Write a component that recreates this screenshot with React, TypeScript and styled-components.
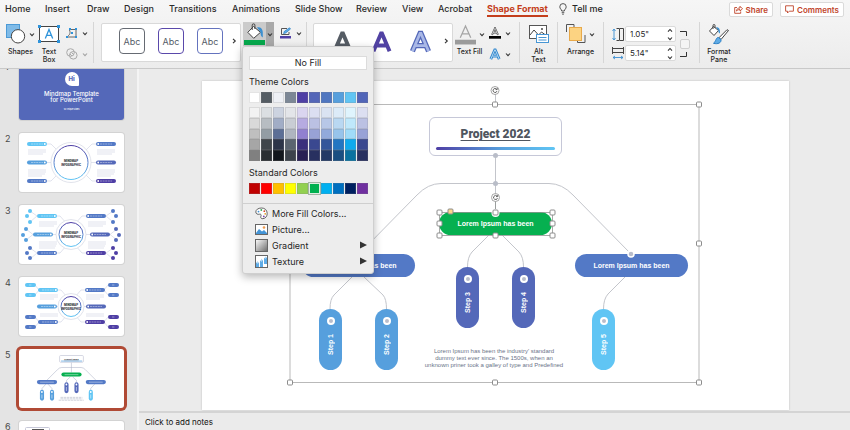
import React from "react";
import styled, { createGlobalStyle, css } from "styled-components";

const ui = `Inter, Roboto, "Liberation Sans", sans-serif`;
const slideFont = `"Liberation Sans", Arial, sans-serif`;

const GlobalStyle = createGlobalStyle`
  *, *::before, *::after { box-sizing: border-box; }
  body { margin: 0; font-family: ${ui}; color: #262626; background: #ebebeb; }
  button, input { font: inherit; color: inherit; }
  button { border: 0; padding: 0; background: none; cursor: pointer; }
  svg { display: block; flex: none; }
`;

/* ---------- frame ---------- */

const Page = styled.div`
  display: flex;
  flex-direction: column;
  height: 100vh;
  overflow: hidden;
`;

const Header = styled.header`
  position: relative;
  z-index: 2;
  background: linear-gradient(#f6f6f6, #ececec);
  border-bottom: 1px solid #c9c9c9;
`;

const TabBar = styled.div`
  display: flex;
  justify-content: space-between;
  height: 20px;
  padding: 0 6px 0 5px;
`;

const Tabs = styled.nav`
  display: flex;
  align-items: flex-start;
  gap: 16px;
`;

const Tab = styled.a<{ $active?: boolean; $width: number }>`
  width: ${(p) => p.$width}px;
  height: 17px;
  line-height: 17px;
  font-size: 9px;
  font-weight: 500;
  white-space: nowrap;
  text-decoration: none;
  color: #2b2b2b;
  ${(p) =>
    p.$active &&
    css`
      color: #c43e1c;
      font-weight: 700;
      border-bottom: 2px solid #c43e1c;
    `}
`;

const TellMe = styled.button`
  display: flex;
  align-items: center;
  gap: 5px;
  height: 17px;
  margin-left: -5px;
  font-size: 9px;
  font-weight: 500;
`;

const Actions = styled.div`
  display: flex;
  gap: 7px;
  padding-top: 2px;
`;

const ActionButton = styled.button`
  display: flex;
  align-items: center;
  justify-content: center;
  gap: 3px;
  height: 15px;
  padding: 0 4px;
  border: 1px solid #dadada;
  border-radius: 2px;
  background: #fff;
  color: #c0452b;
  font-size: 8px;
  font-weight: 600;
`;

/* ---------- ribbon ---------- */

const Ribbon = styled.div`
  display: grid;
  grid-template-columns: 94px 213px 213px 38px 46px 96px 1fr;
  padding: 2px 0 5px;
`;

const Group = styled.div<{ $pad?: number; $center?: boolean }>`
  display: flex;
  align-items: flex-start;
  justify-content: ${(p) => (p.$center ? "center" : "flex-start")};
  height: 41px;
  padding-left: ${(p) => p.$pad ?? 0}px;
  border-right: 1px solid #d6d6d6;
  &:last-child { border-right: 0; }
`;

const Tool = styled.button<{ $width: number; $gap?: number }>`
  display: flex;
  flex-direction: column;
  align-items: center;
  width: ${(p) => p.$width}px;
  margin-right: ${(p) => p.$gap ?? 0}px;
  font-size: 7px;
  font-weight: 500;
  line-height: 8px;
`;

const ToolTop = styled.span`
  display: flex;
  align-items: center;
  gap: 3px;
  height: 26px;
  padding-bottom: 2px;
`;

const Pair = styled.div`
  display: flex;
  flex-direction: column;
  gap: 7px;
  padding-top: 4px;
`;

const MiniButton = styled.button<{ $dim?: boolean }>`
  display: flex;
  align-items: center;
  gap: 4px;
  height: 14px;
  opacity: ${(p) => (p.$dim ? 0.4 : 1)};
`;

const Gallery = styled.div`
  display: flex;
  align-items: center;
  justify-content: space-between;
  width: 140px;
  height: 39px;
  margin-top: 1px;
  padding: 0 3px 3px 17px;
  background: #fff;
  border: 1px solid #d9d9d9;
  border-radius: 2px;
`;

const Samples = styled.div<{ $gap: number }>`
  display: flex;
  gap: ${(p) => p.$gap}px;
`;

const StyleSample = styled.button<{ $color: string }>`
  width: 26px;
  height: 26px;
  border: 1px solid ${(p) => p.$color};
  border-radius: 4px;
  background: #fff;
  color: #555b66;
  font-size: 9px;
`;

const FillWrap = styled.div`
  position: relative;
  display: flex;
  margin: 0 5px 0 2px;
`;

const FillButton = styled.button`
  display: flex;
  flex-direction: column;
  align-items: center;
  justify-content: flex-end;
  width: 23px;
  height: 24px;
  padding-bottom: 1px;
  background: #cbcbcb;
`;

const FillToggle = styled.button`
  display: flex;
  align-items: center;
  justify-content: center;
  width: 8px;
  height: 24px;
  background: #a9a9a9;
`;

const LineButton = styled(MiniButton)`
  margin-top: 4px;
`;

const SizeFields = styled.div`
  display: flex;
  flex-direction: column;
  gap: 3px;
  padding-top: 4px;
`;

const SizeField = styled.label`
  display: flex;
  align-items: center;
  gap: 1px;
  height: 16px;
`;

const SizeBox = styled.span`
  display: flex;
  align-items: center;
  width: 51px;
  height: 16px;
  padding-right: 2px;
  background: #fff;
  border: 1px solid #dadada;
  border-radius: 2px;
`;

const SizeInput = styled.input`
  width: 40px;
  padding: 0 0 0 4px;
  border: 0;
  background: none;
  font-size: 8px;
  outline: 0;
`;

const Stepper = styled.span`
  display: flex;
  flex-direction: column;
  gap: 3px;
  margin-left: auto;
  button { display: block; }
`;

const LockRatio = styled.div`
  display: flex;
  flex-direction: column;
  gap: 3px;
  margin: 9px 0 0 4px;
`;

const LockBox = styled.input`
  appearance: none;
  width: 10px;
  height: 10px;
  margin: 0;
  border: 1px solid #cfcfcf;
  border-radius: 2px;
  background: #f4f4f4;
`;

/* ---------- fill menu ---------- */

const Menu = styled.div`
  position: absolute;
  top: 24px;
  left: -1px;
  width: 132px;
  padding: 9px 0 4px;
  background: #ededed;
  border: 1px solid #cfcfcf;
  border-radius: 3px;
  box-shadow: 0 3px 8px rgba(0, 0, 0, 0.28);
`;

const MenuSection = styled.div`
  padding: 0 6px;
`;

const NoFill = styled.button`
  display: block;
  width: 100%;
  height: 14px;
  background: #fff;
  border: 1px solid #dcdcdc;
  font-size: 9px;
  line-height: 12px;
`;

const MenuTitle = styled.h2`
  margin: 0;
  padding-top: 5px;
  height: 22px;
  font-size: 9px;
  font-weight: 400;
  line-height: 14px;
`;

const SwatchRow = styled.div`
  display: grid;
  grid-template-columns: repeat(10, 11px);
  column-gap: 1px;
  grid-auto-rows: 11px;
`;

const ShadeGrid = styled(SwatchRow)`
  grid-auto-flow: column;
  grid-template-rows: 11px 11px 10px 11px 11px;
  margin: 4px 0 0;
`;

const Swatch = styled.button<{ $color: string; $selected?: boolean }>`
  background: ${(p) => p.$color};
  box-shadow: inset 0 0 0 1px rgba(130, 130, 130, 0.22);
  ${(p) =>
    p.$selected &&
    css`
      outline: 1px solid #a4b3a6;
      box-shadow: inset 0 0 0 1px #dfeee2;
    `}
`;

const MenuRule = styled.hr`
  margin: 9px 0 1px;
  border: 0;
  border-top: 1px solid #cfcfcf;
`;

const MenuItem = styled.button`
  display: flex;
  align-items: center;
  gap: 4px;
  width: 100%;
  height: 16px;
  padding: 0 6px 0 12px;
  font-size: 9px;
  text-align: left;
  svg:last-child:not(:first-child) { margin-left: auto; }
`;

/* ---------- workspace ---------- */

const Workspace = styled.main`
  display: grid;
  grid-template-columns: 139px 1fr;
  flex: 1;
  min-height: 0;
`;

const Sidebar = styled.aside`
  overflow: hidden;
  background: #e4e4e4;
  border-right: 2px solid #f4f4f4;
`;

const SlideList = styled.ol`
  display: flex;
  flex-direction: column;
  gap: 13px;
  margin: -8px 0 0;
  padding: 0;
  list-style: none;
`;

const SlideEntry = styled.li`
  display: grid;
  grid-template-columns: 14px 105px;
  padding-left: 5px;
  font-size: 9px;
  line-height: 11px;
  color: #4a4a4a;
`;

const Thumb = styled.button<{ $active?: boolean; $cover?: boolean }>`
  height: 59px;
  border-radius: 3px;
  background: ${(p) => (p.$cover ? "#5468b9" : "#fff")};
  color: #fff;
  overflow: hidden;
  box-shadow: ${(p) =>
    p.$active ? "0 0 0 3px #b04a35" : "0 0 0 1px #d3d3d3"};
`;

const Cover = styled.span`
  display: flex;
  flex-direction: column;
  align-items: center;
  padding-top: 1px;
  font-size: 6px;
  font-weight: 500;
  line-height: 6px;
  small { margin-top: 5px; font-size: 2px; line-height: 3px; }
`;

const CoverTitle = styled.span`
  margin-top: 5px;
`;

const Logo = styled.span`
  display: grid;
  place-items: center;
  width: 14px;
  height: 14px;
  border-radius: 7px 7px 1px 7px;
  background: #fff;
  color: #5468b9;
  font-size: 6px;
  font-weight: 800;
`;

const Editor = styled.section`
  display: flex;
  flex-direction: column;
  min-width: 0;
`;

const Stage = styled.div`
  flex: 1;
  min-height: 0;
  padding: 12px 61px 0 63px;
`;

const Slide = styled.div`
  display: flex;
  justify-content: center;
  background: #fff;
  box-shadow: 0 0 2px rgba(0, 0, 0, 0.2);
`;

const Board = styled.div`
  position: relative;
  width: 587px;
  height: 329px;
  flex: none;
  font-family: ${slideFont};
`;

const Wires = styled.svg`
  position: absolute;
  inset: 0;
`;

const at = css<{ $x: number; $y: number }>`
  position: absolute;
  left: ${(p) => p.$x}px;
  top: ${(p) => p.$y}px;
`;

const TitleNode = styled.div<{ $x: number; $y: number }>`
  ${at}
  width: 133px;
  height: 39px;
  padding: 7px 6px 0;
  border: 1px solid #c6c8d8;
  border-radius: 6px;
  background: #fff;
  text-align: center;
`;

const ProjectTitle = styled.h1`
  margin: 0 0 4px;
  font-family: Impact, Roboto, sans-serif;
  font-size: 12px;
  font-weight: 900;
  line-height: 18px;
  color: #50565f;
  text-decoration: underline;
  text-decoration-thickness: 1px;
  text-underline-offset: 2px;
`;

const TitleBar = styled.div`
  height: 3px;
  border-radius: 2px;
  background: linear-gradient(90deg, #4f3fa5, #569fdd 55%, #60c5f4);
`;

const Pill = styled.div<{ $x: number; $y: number; $color: string }>`
  ${at}
  display: flex;
  align-items: center;
  justify-content: center;
  width: 113px;
  height: 23px;
  border-radius: 12px;
  background: ${(p) => p.$color};
  color: #fff;
  font-size: 7px;
  font-weight: 700;
`;

const StepNode = styled.div<{ $x: number; $y: number; $color: string }>`
  ${at}
  display: flex;
  flex-direction: column;
  align-items: center;
  width: 23px;
  height: 61px;
  padding-top: 8px;
  border-radius: 12px;
  background: ${(p) => p.$color};
  color: #fff;
`;

const StepDot = styled.span`
  width: 8px;
  height: 8px;
  border: 2px solid #fff;
  border-radius: 50%;
  background: #b9bdcb;
`;

const StepText = styled.span`
  margin-top: 9px;
  writing-mode: vertical-rl;
  transform: rotate(180deg);
  font-size: 7px;
  font-weight: 700;
  line-height: 9px;
`;

const Caption = styled.p<{ $x: number; $y: number }>`
  ${at}
  width: 160px;
  margin: 0;
  text-align: center;
  font-size: 6px;
  line-height: 7px;
  color: #6c7388;
`;

const Notes = styled.footer`
  height: 19px;
  padding-left: 6px;
  border-top: 2px solid #d4d4d4;
  background: #ebebeb;
  font-size: 8px;
  line-height: 19px;
  color: #111;
`;

/* ---------- icons ---------- */

const Chevron = ({ dir = "down" }: { dir?: "down" | "right" | "up" }) => {
  const d = { down: "M1 1.5 3 3.7 5 1.5", up: "M1 3.7 3 1.5 5 3.7", right: "M2 .8 4.3 3 2 5.2" }[dir];
  return (
    <svg width="6" height={dir === "right" ? 6 : 5} fill="none" stroke="#333" strokeWidth="1.1">
      <path d={d} />
    </svg>
  );
};

const ShapesIcon = () => (
  <svg width="20" height="20">
    <rect x=".5" y=".5" width="13" height="13" fill="#7fbbe8" stroke="#4c9ad6" />
    <circle cx="12" cy="12.3" r="6.7" fill="#fff" stroke="#444" />
  </svg>
);

const TextBoxIcon = () => (
  <svg width="22" height="18">
    <rect x="1.5" y="1.5" width="19" height="15" fill="#fff" stroke="#444" />
    <path d="M7.3 13.5 11 4.5l3.7 9M8.5 10.4h5" fill="none" stroke="#2f93da" strokeWidth="1.3" />
    {[[0, 0], [19, 0], [0, 15], [19, 15]].map(([x, y]) => (
      <rect key={`${x}-${y}`} x={x} y={y} width="3" height="3" fill="#2f93da" />
    ))}
  </svg>
);

const EditShapeIcon = () => (
  <svg width="12" height="11" fill="none">
    <path d="M4 1.500h6M10 2v7M9 9H2M1.500 8.500C3 7 5 6 3.500 2" stroke="#555" strokeWidth=".9" />
    {[[3, 0], [9, 0], [9, 8], [0, 8], [5, 4]].map(([x, y]) => (
      <rect key={`${x}-${y}`} x={x} y={y} width="2" height="2" fill="#2f93da" />
    ))}
  </svg>
);

const MergeIcon = () => (
  <svg width="12" height="12" fill="none" stroke="#444">
    <circle cx="4.5" cy="4.5" r="3.8" />
    <circle cx="7.3" cy="7.3" r="3.8" />
    <path d="m4 6 2 2M5.5 4.5l2 2" />
  </svg>
);

const BucketIcon = () => (
  <svg width="18" height="17" fill="none">
    <path d="m7.5 3.500 7 5.800-6.800 6-5.900-6z" fill="#fff" stroke="#444" strokeLinejoin="round" />
    <path d="M6.200 7V2.200a1.300 1.300 0 0 1 2.700 0V6" stroke="#444" />
    <path d="M11 4.500c3-1 5.500.8 5.800 4.500v5.500c-2-.8-2.300-3.500-2.300-5.500z" fill="#3a8fd0" />
  </svg>
);

const LineIcon = () => (
  <svg width="13" height="12" fill="none">
    <path d="M8 1.500H2.500v6H10V5" stroke="#555" />
    <path d="m4.500 6.500 1-2.300L10.500.8l1 1.200-4.800 4z" fill="#5eabe6" stroke="#2b7fc4" strokeWidth=".7" />
    <rect x="1" y="9" width="11" height="2.500" fill="#4f3fa5" />
  </svg>
);

const LetterA = ({
  size,
  fill,
  stroke,
  bar,
  weight = 2,
  outline = 2.2,
}: {
  size: number;
  fill: string;
  stroke?: string;
  bar?: string;
  weight?: number;
  outline?: number;
}) => {
  const d = bar ? "M5 13 10 2l5 11M6.8 9.300h6.400" : "M3 18.500 9.600 3h.8L17 18.500M5.800 13.500h8.400";
  return (
    <svg width={size} height={size} viewBox="0 0 20 20" fill="none">
      {stroke && <path d={d} stroke={stroke} strokeWidth={weight + outline} />}
      <path d={d} stroke={fill} strokeWidth={weight} />
      {bar && <rect y="15" width="20" height="4.500" fill={bar} />}
    </svg>
  );
};

const AltTextIcon = () => (
  <svg width="21" height="20" fill="none">
    <rect x="1.500" y="1.500" width="17" height="13" fill="#fff" stroke="#555" />
    <path d="m2 11 4-5 4.500 5 3-3 4 3" stroke="#444" />
    <circle cx="14" cy="5" r="1" fill="#444" />
    <rect x="8.500" y="10.500" width="12" height="8" fill="#fff" stroke="#4796d4" />
    <path d="M10.500 13.500h8M10.500 16h8" stroke="#4796d4" />
  </svg>
);

const ArrangeIcon = () => (
  <svg width="20" height="20" fill="none">
    <path d="M.5 8V.5H8V4M19 11v7.500h-7.500V16" stroke="#555" />
    <rect x="3.500" y="3.500" width="12" height="13" fill="#fcd382" stroke="#e8a94a" />
  </svg>
);

const HeightIcon = () => (
  <svg width="12" height="13" fill="none">
    <path d="M2 1v11M.5 3 2 1l1.500 2M.5 10 2 12l1.500-2" stroke="#3b8fd2" strokeWidth=".9" />
    <path d="M4.500.5H7M4.500 12.500H7M7.500.5h4v12h-4z" stroke="#444" />
  </svg>
);

const WidthIcon = () => (
  <svg width="12" height="13" fill="none">
    <path d="M.5 0v7M11.500 0v7M.5 1.500h11v4H.5" stroke="#444" />
    <path d="M1 10.500h10M3 9l-2 1.500L3 12M9 9l2 1.500L9 12" stroke="#3b8fd2" strokeWidth=".9" />
  </svg>
);

const FormatPaneIcon = () => (
  <svg width="22" height="21" fill="none">
    <path d="m5.500 2.500 5 4-4.500 5L1.500 7z" fill="#fff" stroke="#444" />
    <path d="M5 5V1.500a1 1 0 0 1 2 0V4" stroke="#444" />
    <path d="M8 3.500c2.500-1 4.300 1 4 6-2-.8-1.500-2.500-1.800-3.500z" fill="#3a8fd0" />
    <path d="m20.500 6.500-7.500 9-2-1.800 8-8z" fill="#fff" stroke="#444" />
    <path d="M10.500 13.500c-2.500-.4-2.500 4-5 5.800 4.500 1.200 8-.5 7.500-3.800z" fill="#5eabe6" stroke="#2b7fc4" />
  </svg>
);

const BulbIcon = () => (
  <svg width="8" height="12" fill="none" stroke="#444" strokeWidth=".9">
    <path d="M2.700 8C2.700 6.300.8 6 .8 3.800a3.200 3.200 0 0 1 6.400 0C7.200 6 5.300 6.300 5.300 8zM2.700 9.700h2.600M3.200 11.200h1.600" />
  </svg>
);

const ShareIcon = () => (
  <svg width="9" height="9" fill="none" stroke="#c0452b" strokeWidth=".9">
    <path d="M3 2.500H.7v5.800h6V6.500M2.500 6c.3-2.300 1.500-3 3.500-3V1.300l2.500 2.500L6 6V4.600c-1.500 0-2.500.2-3.500 1.400z" />
  </svg>
);

const CommentIcon = () => (
  <svg width="9" height="9" fill="none" stroke="#c0452b" strokeWidth=".9">
    <path d="M.6.8h7.800v5.400H4.300L2.500 8V6.200H.6z" />
  </svg>
);

const PaletteIcon = () => (
  <svg width="13" height="13" fill="none">
    <path d="M6.500 1C3 1 .8 2.800.8 5c0 2 2 2.600 3.600 2.200 1.500-.4 2.200.7 1.500 2-.7 1.500.3 2.700 2 2.500C10.700 11.400 12.300 9 12.200 6.300 12 3 9.800 1 6.500 1z" fill="#fff" stroke="#555" strokeWidth=".9" />
    <circle cx="3.500" cy="4.600" r=".9" fill="#3b8fd2" />
    <circle cx="6.300" cy="3" r=".9" fill="#35a853" />
    <circle cx="9.300" cy="4.200" r=".9" fill="#d0492f" />
    <circle cx="10.200" cy="6.800" r=".9" fill="#e2a129" />
    <circle cx="8.800" cy="9.400" r=".9" fill="#7a48a8" />
  </svg>
);

const PictureIcon = () => (
  <svg width="13" height="11" fill="none">
    <rect x=".5" y=".5" width="12" height="10" fill="#fff" stroke="#666" />
    <path d="m1 9 3-4 3 2.500 2-1.500 3 3v1H1z" fill="#4394d6" />
    <circle cx="9" cy="3.500" r="1.300" fill="#ee9a4d" />
  </svg>
);

const GradientIcon = () => (
  <svg width="13" height="13">
    <defs>
      <linearGradient id="greys" x1="0" y1="0" x2="1" y2="1">
        <stop offset="0" stopColor="#fff" />
        <stop offset="1" stopColor="#6a6a6a" />
      </linearGradient>
    </defs>
    <rect x=".5" y=".5" width="12" height="12" fill="url(#greys)" stroke="#666" />
  </svg>
);

const TextureIcon = () => (
  <svg width="13" height="13">
    <rect x=".5" y=".5" width="12" height="12" fill="#fff" stroke="#666" />
    <path d="M1 12V7l1.500 2v-3L4 8.500V12zM5 12V5l1.500 2V3.500L8 6v6zM9 9V2.500L10.500 4V1.500L12 3v6z" fill="#5eabe6" />
  </svg>
);

const Arrow = () => (
  <svg width="7" height="8">
    <path d="M0 .5 7 4 0 7.500z" fill="#333" />
  </svg>
);

/* ---------- drawings ---------- */

type Branch = [number, number, string, number?];

const MapDrawing = ({
  radius,
  branches,
  dots = [],
  wires,
}: {
  radius: number;
  branches: Branch[];
  dots?: [number, number, string][];
  wires: string;
}) => (
  <svg width="105" height="59" fill="none">
    <path d={wires} stroke="#ccd0e0" strokeWidth=".6" />
    <circle cx="52" cy="29.500" r={radius + 3} fill="#fff" stroke="#d4d7e3" strokeWidth=".7" />
    <defs>
      <linearGradient id={`ring${radius}`} x1="0" y1="0" x2="0" y2="1">
        <stop offset="0" stopColor="#4f3fa5" />
        <stop offset="1" stopColor="#60c5f4" />
      </linearGradient>
    </defs>
    <circle cx="52" cy="29.500" r={radius} stroke={`url(#ring${radius})`} />
    <g fill="#363a42" fontFamily="Roboto, sans-serif" fontSize="3" fontWeight="900" textAnchor="middle">
      <text x="52" y="29">MINDMAP</text>
      <text x="52" y="32.500">INFOGRAPHIC</text>
    </g>
    {branches.map(([x, y, color, w = 20], i) => (
      <g key={i}>
        <rect x={x} y={y - 2} width={w} height="4" rx="2" fill={color} />
        <path d={`M${x + 4} ${y}h${w - 8}`} stroke="#fff" strokeOpacity=".5" strokeWidth=".8" strokeDasharray="2 .6" />
        {w === 20 && <circle cx={x > 52 ? x + 2.2 : x + w - 2.2} cy={y} r=".9" fill="#fff" />}
      </g>
    ))}
    {dots.map(([x, y, color], i) => (
      <circle key={i} cx={x} cy={y} r="2" fill={color} />
    ))}
  </svg>
);

const sky = "#60c5f4";
const azure = "#569fdd";
const blue = "#5379c6";
const indigo = "#5468b9";
const violet = "#4f3fa5";
const green = "#06b050";

const MapTwo = () => (
  <MapDrawing
    radius={17}
    wires="M28 11h4l8 8M28 29.500h8M28 48h4l8-8M77 11h-4l-8 8M77 29.500h-8M77 48h-4l-8-8M9 17h18M9 19h18M9 21h15M9 37h18M9 39h18M9 41h17M9 43h14M78 17h18M78 19h18M78 21h15M78 37h18M78 39h18M78 41h17M78 43h14"
    branches={[[8, 11, sky], [8, 29.5, azure], [8, 48, blue], [77, 11, blue], [77, 29.5, indigo], [77, 48, violet]]}
  />
);

const MapThree = () => (
  <MapDrawing
    radius={12}
    wires="M38 11h3l7 8M34 29.500h6M38 48h3l7-8M67 11h-4l-7 8M72 29.500h-7M67 48h-4l-7-8M11 6l7 5-7 6M7 24l7 5.500L7 35M11 43l7 5-7 6M94 6l-7 5 7 6M98 24l-7 5.500 7 5.500M94 43l-7 5 7 6M20 17h18M20 19h18M20 21h15M20 37h18M20 39h18M20 41h17M20 43h16M69 17h18M69 19h18M69 21h15M69 37h18M69 39h18M69 41h17M69 43h16"
    branches={[[18, 11, sky], [14, 29.5, azure], [18, 48, blue], [67, 11, blue], [71, 29.5, indigo], [67, 48, violet]]}
    dots={[
      [11, 6, sky], [8, 11, sky], [11, 17, sky],
      [7, 24, azure], [4, 30, azure], [7, 35, azure],
      [11, 43, blue], [8, 48, blue], [11, 53, blue],
      [94, 6, blue], [97, 11, blue], [94, 17, blue],
      [97, 24, indigo], [100, 30, indigo], [97, 35, indigo],
      [94, 43, violet], [97, 48, violet], [94, 53, violet],
    ]}
  />
);

const MapFour = () => (
  <MapDrawing
    radius={10}
    wires="M16 8l4 5-4 5M16 40l4 5-4 5M89 8l-4 5 4 5M89 40l-4 5 4 5M39 13h3l6 7M38 29.500h4M39 45h3l6-7M66 13h-4l-6 7M68 29.500h-4M66 45h-4l-6-7M21 18h18M21 20h18M21 22h14M21 37h18M21 39h18M67 18h18M67 20h18M67 22h14M67 37h18M67 39h18"
    branches={[
      [19, 13, sky], [18, 29.5, azure], [19, 45, blue], [66, 13, blue], [67, 29.5, indigo], [66, 45, violet],
      [6, 8, sky, 11], [6, 18, sky, 11], [6, 40, blue, 11], [6, 50, blue, 11],
      [89, 8, blue, 11], [89, 18, blue, 11], [89, 40, violet, 11], [89, 50, violet, 11],
    ]}
  />
);

const ChartThumb = () => (
  <svg width="105" height="59" viewBox="0 0 587 329" fill="none">
    <path d="M293 74v57M157 173l58-58q11-12 24-12h108q13 0 24 12l58 58M150 196l-21 24v10M162 196l22 24v10M287 155l-21 20v12M300 155l21 20v12M423 196l-22 24v10" stroke="#aab0c4" strokeWidth="3" />
    <rect x="227" y="36" width="133" height="38" rx="6" fill="#fff" stroke="#c6c8d8" strokeWidth="4" />
    <text x="293" y="60" fill="#33363c" fontFamily="Roboto, sans-serif" fontWeight="900" fontSize="14" textAnchor="middle" textDecoration="underline">Project 2022</text>
    <path d="M235 67h118" stroke={azure} strokeWidth="4" />
    {[[237, 131, green], [100, 173, blue], [373, 173, blue]].map(([x, y, c]) => (
      <g key={String(x)}>
        <rect x={x} y={y} width="113" height="23" rx="12" fill={String(c)} />
        <path d={`M${Number(x) + 18} ${Number(y) + 12}h77`} stroke="#fff" strokeOpacity=".6" strokeWidth="4" />
      </g>
    ))}
    {[[117, 228, azure], [173, 228, azure], [254, 186, indigo], [310, 186, indigo], [390, 228, sky]].map(([x, y, c]) => (
      <g key={String(x)}>
        <rect x={x} y={y} width="23" height="61" rx="12" fill={String(c)} />
        <circle cx={Number(x) + 11} cy={Number(y) + 12} r="5" fill="#fff" />
        <path d={`M${Number(x) + 11} ${Number(y) + 26}v22`} stroke="#fff" strokeOpacity=".6" strokeWidth="5" />
      </g>
    ))}
    <path d="M232 270h122M232 278h122M222 286h140" stroke="#bfc3cf" strokeWidth="4" strokeDasharray="14 3" />
  </svg>
);

const SixThumb = () => (
  <svg width="105" height="59" fill="none">
    <rect x="6.500" y="6.500" width="24" height="8" rx="1" stroke="#c6c8d8" />
    <path d="M13 8.500h12" stroke="#555" />
  </svg>
);

const Handle = ({ x, y, color = "#fff" }: { x: number; y: number; color?: string }) => (
  <rect x={x - 2.5} y={y - 2.5} width="5" height="5" rx="1" fill={color} stroke="#8d8d8d" />
);

const Rotate = ({ x, y }: { x: number; y: number }) => (
  <g transform={`translate(${x} ${y})`} fill="none">
    <circle r="4" fill="#fff" stroke="#8f8f8f" strokeWidth=".8" />
    <path d="M1.500-1.400A2 2 0 1 0 2 .5M2.200-2.500V-.9H.6" stroke="#444" strokeWidth=".8" />
  </g>
);

/* ---------- data ---------- */

const tabs: [string, number][] = [
  ["Home", 24], ["Insert", 26], ["Draw", 21], ["Design", 29], ["Transitions", 47], ["Animations", 47],
  ["Slide Show", 45], ["Review", 30], ["View", 20], ["Acrobat", 33],
];

const themeColors = ["#ffffff", "#545c63", "#eef0f5", "#7c8796", "#4f3fa5", "#5466b8", "#4f76c0", "#569fdd", "#60c5f4", "#5165b8"];

const shades = [
  ["#f2f2f2", "#d9d9d9", "#bfbfbf", "#a6a6a6", "#808080"],
  ["#dbdfe2", "#b7bdc2", "#939da4", "#3f454a", "#2a2e32"],
  ["#ccd3e0", "#a1adc6", "#5c6f96", "#2c3448", "#12161c"],
  ["#e3e5e9", "#c9cdd4", "#afb5c0", "#5b6470", "#3d434b"],
  ["#dad5f0", "#b6abe1", "#9180d0", "#3b2f7c", "#281f53"],
  ["#dcdff1", "#bbc1e3", "#98a2d6", "#3a4890", "#283060"],
  ["#dae3f2", "#b7c7e7", "#92aadb", "#33569a", "#233a66"],
  ["#dcebf8", "#b9d8f2", "#97c4eb", "#2376c2", "#1a4f81"],
  ["#dff4fd", "#bfe8fb", "#a0dcf9", "#10aaee", "#0a72a0"],
  ["#dcdff1", "#bbc1e3", "#98a2d6", "#3a4890", "#283060"],
];

const standardColors = ["#c00000", "#ff0000", "#ffc000", "#ffff00", "#92d050", "#00b050", "#00b0f0", "#0070c0", "#002060", "#7030a0"];

const steps: [string, number, number, string][] = [
  ["Step 1", 117, 228, azure],
  ["Step 2", 173, 228, azure],
  ["Step 3", 254, 186, indigo],
  ["Step 4", 310, 186, indigo],
  ["Step 5", 390, 228, sky],
];

const frameHandles = [[88, 23], [293, 23], [497, 23], [88, 162], [497, 162], [88, 301], [293, 301], [497, 301]];
const pillHandles = [[237, 131], [350, 131], [237, 142], [350, 142], [237, 154], [293, 154], [350, 154]];

const thumbs = [null, <MapTwo />, <MapThree />, <MapFour />, <ChartThumb />, <SixThumb />];

/* ---------- sections ---------- */

const FillMenu = () => (
  <Menu role="menu" aria-label="Shape fill">
    <MenuSection>
      <NoFill>No Fill</NoFill>
      <MenuTitle>Theme Colors</MenuTitle>
      <SwatchRow>
        {themeColors.map((c, i) => <Swatch key={i} $color={c} aria-label={c} />)}
      </SwatchRow>
      <ShadeGrid>
        {shades.flat().map((c, i) => <Swatch key={i} $color={c} aria-label={c} />)}
      </ShadeGrid>
      <MenuTitle>Standard Colors</MenuTitle>
      <SwatchRow>
        {standardColors.map((c) => <Swatch key={c} $color={c} $selected={c === "#00b050"} aria-label={c} />)}
      </SwatchRow>
    </MenuSection>
    <MenuRule />
    <MenuItem role="menuitem"><PaletteIcon /><span>More Fill Colors...</span></MenuItem>
    <MenuItem role="menuitem"><PictureIcon /><span>Picture...</span></MenuItem>
    <MenuItem role="menuitem"><GradientIcon /><span>Gradient</span><Arrow /></MenuItem>
    <MenuItem role="menuitem"><TextureIcon /><span>Texture</span><Arrow /></MenuItem>
  </Menu>
);

const SizeControl = ({ label, value, icon }: { label: string; value: string; icon: React.ReactNode }) => (
  <SizeField>
    {icon}
    <SizeBox>
      <SizeInput aria-label={label} defaultValue={value} />
      <Stepper>
        <button aria-label={`Increase ${label}`}><Chevron dir="up" /></button>
        <button aria-label={`Decrease ${label}`}><Chevron /></button>
      </Stepper>
    </SizeBox>
  </SizeField>
);

const FormatRibbon = () => (
  <Ribbon>
    <Group $pad={5}>
      <Tool $width={31}><ToolTop><ShapesIcon /><Chevron /></ToolTop>Shapes</Tool>
      <Tool $width={26} $gap={4}><ToolTop><TextBoxIcon /></ToolTop>Text<br />Box</Tool>
      <Pair>
        <MiniButton aria-label="Edit shape"><EditShapeIcon /><Chevron /></MiniButton>
        <MiniButton $dim aria-label="Merge shapes"><MergeIcon /><Chevron /></MiniButton>
      </Pair>
    </Group>
    <Group $pad={7}>
      <Gallery>
        <Samples $gap={13}>
          <StyleSample $color="#666b73">Abc</StyleSample>
          <StyleSample $color="#5a49ab">Abc</StyleSample>
          <StyleSample $color="#6473be">Abc</StyleSample>
        </Samples>
        <Chevron dir="right" />
      </Gallery>
      <FillWrap>
        <FillButton aria-label="Shape fill color">
          <BucketIcon />
          <svg width="21" height="5"><rect width="21" height="5" fill="#06a84c" /></svg>
        </FillButton>
        <FillToggle aria-label="Open fill menu"><Chevron /></FillToggle>
        <FillMenu />
      </FillWrap>
      <LineButton aria-label="Shape outline"><LineIcon /><Chevron /></LineButton>
    </Group>
    <Group $pad={6}>
      <Gallery>
        <Samples $gap={16}>
          <LetterA size={23} fill="#555c64" weight={3.4} />
          <LetterA size={23} fill="#5142a3" weight={3.4} />
          <LetterA size={23} fill="#a9b8e6" stroke="#5468b9" weight={2.4} />
        </Samples>
        <Chevron dir="right" />
      </Gallery>
      <Tool $width={33} $gap={3}>
        <ToolTop><LetterA size={21} fill="#a5a5a5" bar="#9b9b9b" weight={1.2} /><Chevron /></ToolTop>
        Text Fill
      </Tool>
      <Pair>
        <MiniButton aria-label="Text outline"><LetterA size={12} fill="#fff" stroke="#444" bar="#000" weight={1} outline={2} /><Chevron /></MiniButton>
        <MiniButton aria-label="Text effects"><LetterA size={12} fill="#b8dbf6" stroke="#2f85cc" weight={1.6} outline={3} /><Chevron /></MiniButton>
      </Pair>
    </Group>
    <Group $center>
      <Tool $width={26}><ToolTop><AltTextIcon /></ToolTop>Alt<br />Text</Tool>
    </Group>
    <Group $center>
      <Tool $width={34}><ToolTop><ArrangeIcon /><Chevron /></ToolTop>Arrange</Tool>
    </Group>
    <Group $pad={8}>
      <SizeFields>
        <SizeControl label="Height" value={'1.05"'} icon={<HeightIcon />} />
        <SizeControl label="Width" value={'5.14"'} icon={<WidthIcon />} />
      </SizeFields>
      <LockRatio>
        <svg width="7" height="5" fill="none" stroke="#333"><path d="M0 .5h6.500V5" /></svg>
        <LockBox type="checkbox" aria-label="Lock aspect ratio" />
        <svg width="7" height="5" fill="none" stroke="#333"><path d="M0 4.500h6.500V0" /></svg>
      </LockRatio>
    </Group>
    <Group $pad={5}>
      <Tool $width={28}><ToolTop><FormatPaneIcon /></ToolTop>Format<br />Pane</Tool>
    </Group>
  </Ribbon>
);

const Diagram = () => (
  <Board>
    <Wires width="587" height="329" fill="none" stroke="#c3c5cb">
      <path d="M88 23.500h409v278H88z" stroke="#b9b9b9" />
      <path d="M293.500 9v14M293.500 74v57M157 173l58-59q11-11.500 24-11.500h108q13 0 24 11.500l58 59" />
      <path d="M150 196l-18 18q-4 4-4 14M162 196l19 18q3.500 4 3.500 14M287 154l-17 17q-4.500 5-4.500 15M300 154l17 17q4.500 5 4.500 15M423 196l-17 17q-4.500 5-4.500 15" />
    </Wires>
    <TitleNode $x={227} $y={36}>
      <ProjectTitle>Project 2022</ProjectTitle>
      <TitleBar />
    </TitleNode>
    <Pill $x={237} $y={131} $color={green}>Lorem Ipsum has been</Pill>
    <Pill $x={100} $y={173} $color={blue}>Lorem Ipsum has been</Pill>
    <Pill $x={373} $y={173} $color={blue}>Lorem Ipsum has been</Pill>
    {steps.map(([label, x, y, color]) => (
      <StepNode key={label} $x={x} $y={y} $color={color}>
        <StepDot />
        <StepText>{label}</StepText>
      </StepNode>
    ))}
    <Caption $x={212} $y={267}>
      Lorem Ipsum has been the industry' standard<br />
      dummy text ever since. The 1500s, when an<br />
      unknown priner took a galley of type and Predefined
    </Caption>
    <Wires width="587" height="329" fill="none">
      <circle cx="293.500" cy="74.500" r="2.500" fill="#b9bdc8" />
      <circle cx="293.500" cy="102.500" r="2.500" fill="#b9bdc8" />
      <circle cx="429" cy="173" r="3" fill="#b9bdcb" stroke="#fff" strokeWidth="1.500" />
      <path d="M237.500 131.500h113v23h-113zM293.500 119v12" stroke="#8f9490" strokeWidth=".8" />
      <circle cx="293.500" cy="132" r="4" fill="#fff" />
      {frameHandles.map(([x, y]) => <Handle key={`f${x}-${y}`} x={x} y={y + 0.5} />)}
      {pillHandles.map(([x, y]) => <Handle key={`p${x}-${y}`} x={x + 0.5} y={y + 0.5} />)}
      <Handle x={293.5} y={131.5} />
      <Handle x={248.5} y={130.5} color="#fbd78a" />
      <Rotate x={293} y={9.5} />
      <Rotate x={293.5} y={116.5} />
    </Wires>
  </Board>
);

export default function App() {
  return (
    <Page>
      <GlobalStyle />
      <Header>
        <TabBar>
          <Tabs>
            {tabs.map(([name, width]) => <Tab key={name} href="#" $width={width}>{name}</Tab>)}
            <Tab href="#" $active $width={61} aria-current="page">Shape Format</Tab>
            <TellMe><BulbIcon />Tell me</TellMe>
          </Tabs>
          <Actions>
            <ActionButton><ShareIcon />Share</ActionButton>
            <ActionButton><CommentIcon />Comments</ActionButton>
          </Actions>
        </TabBar>
        <FormatRibbon />
      </Header>
      <Workspace>
        <Sidebar>
          <SlideList>
            {thumbs.map((drawing, i) => (
              <SlideEntry key={i}>
                <span>{i + 1}</span>
                <Thumb $cover={i === 0} $active={i === 4} aria-label={`Slide ${i + 1}`}>
                  {drawing ?? (
                    <Cover>
                      <Logo>Hi</Logo>
                      <CoverTitle>Mindmap Template<br />for PowerPoint</CoverTitle>
                      <small>16 Unique Slides</small>
                    </Cover>
                  )}
                </Thumb>
              </SlideEntry>
            ))}
          </SlideList>
        </Sidebar>
        <Editor>
          <Stage>
            <Slide><Diagram /></Slide>
          </Stage>
          <Notes>Click to add notes</Notes>
        </Editor>
      </Workspace>
    </Page>
  );
}
